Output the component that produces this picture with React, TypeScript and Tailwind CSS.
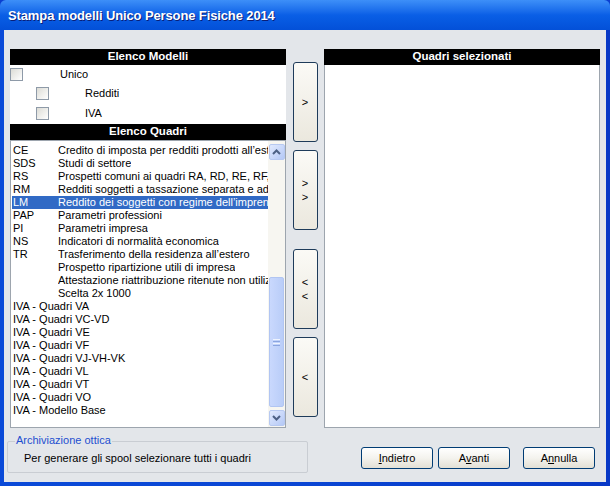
import React from "react";

const rows: [string, string][] = [
  ["CE", "Credito di imposta per redditi prodotti all\u2019estero"],
  ["SDS", "Studi di settore"],
  ["RS", "Prospetti comuni ai quadri RA, RD, RE, RF, RG, RH"],
  ["RM", "Redditi soggetti a tassazione separata e ad imposta sostitutiva"],
  ["LM", "Reddito dei soggetti con regime dell\u2019imprenditoria giovanile"],
  ["PAP", "Parametri professioni"],
  ["PI", "Parametri impresa"],
  ["NS", "Indicatori di normalit\u00e0 economica"],
  ["TR", "Trasferimento della residenza all\u2019estero"],
  ["", "Prospetto ripartizione utili di impresa"],
  ["", "Attestazione riattribuzione ritenute non utilizzate"],
  ["", "Scelta 2x 1000"],
  ["IVA - Quadri VA", ""],
  ["IVA - Quadri VC-VD", ""],
  ["IVA - Quadri VE", ""],
  ["IVA - Quadri VF", ""],
  ["IVA - Quadri VJ-VH-VK", ""],
  ["IVA - Quadri VL", ""],
  ["IVA - Quadri VT", ""],
  ["IVA - Quadri VO", ""],
  ["IVA - Modello Base", ""],
];

function Check() {
  return (
    <div className="w-[13px] h-[13px] border border-[#8e9aa8] bg-gradient-to-br from-[#dcdcd6] to-[#ffffff] shrink-0" />
  );
}

function MoveButton({ label }: { label: string[] }) {
  return (
    <div className="w-[25px] h-[80px] rounded-[3px] border border-[#1e3b5a] bg-gradient-to-b from-[#fbfaf6] to-[#ebe8de] flex flex-col items-center justify-center gap-[2px] text-[11px] leading-[12px] text-black">
      {label.map((l, i) => (
        <span key={i}>{l}</span>
      ))}
    </div>
  );
}

function XpButton({ pre, u, post }: { pre: string; u: string; post: string }) {
  return (
    <div className="w-[72px] h-[22px] rounded-[3px] border border-[#003c74] bg-gradient-to-b from-[#ffffff] via-[#f4f3ee] to-[#e3e0d5] flex items-center justify-center text-[11px] text-black">
      <span>
        {pre}
        <span className="underline">{u}</span>
        {post}
      </span>
    </div>
  );
}

function ScrollArrow({ up }: { up: boolean }) {
  return (
    <div className="w-[16px] h-[16px] rounded-[2px] border border-[#b7c9f1] bg-gradient-to-br from-[#e1eafe] to-[#b4c8f6] flex items-center justify-center">
      <svg width="9" height="6" viewBox="0 0 9 6">
        <path
          d={up ? "M1 5 L4.5 1.5 L8 5" : "M1 1 L4.5 4.5 L8 1"}
          fill="none"
          stroke="#4d6185"
          strokeWidth="2"
        />
      </svg>
    </div>
  );
}

export default function App() {
  return (
    <div
      className="w-[610px] h-[486px] flex flex-col bg-[#0a3fd0] overflow-hidden"
      style={{ fontFamily: '"Liberation Sans", Arial, sans-serif' }}
    >
      {/* Title bar */}
      <div className="h-[30px] shrink-0 bg-gradient-to-b from-[#3d8ff8] via-[#0a5fe6] to-[#0350d8] flex items-center pl-[8px] pt-[1px] rounded-t-[6px]">
        <span
          className="text-white font-bold text-[13px] tracking-[-0.12px]"
          style={{ textShadow: "1px 1px 0 #0a1e78" }}
        >
          Stampa modelli Unico Persone Fisiche 2014
        </span>
      </div>
      {/* Frame + client */}
      <div className="flex-1 flex px-[4px] pb-[4px] bg-gradient-to-r from-[#0a4ad8] via-[#0a46d4] to-[#0838c6]">
        <div className="flex-1 bg-[#e3e6ea] flex flex-col">
          {/* main area */}
          <div className="flex gap-0 pt-[19px] px-[6px] h-[398px]">
            {/* left panel */}
            <div className="w-[276px] flex flex-col">
              <div className="h-[16px] bg-black text-white font-bold text-[11.5px] flex items-center justify-center">
                Elenco Modelli
              </div>
              <div className="h-[59px] bg-white text-[11px] text-black relative">
                <div className="flex items-center h-[14px] mt-[2px]">
                  <Check />
                  <span className="ml-[37px]">Unico</span>
                </div>
                <div className="flex items-center h-[14px] mt-[5px] pl-[26px]">
                  <Check />
                  <span className="ml-[36px]">Redditi</span>
                </div>
                <div className="flex items-center h-[14px] mt-[6px] pl-[26px]">
                  <Check />
                  <span className="ml-[36px]">IVA</span>
                </div>
              </div>
              <div className="h-[16px] bg-black text-white font-bold text-[11.5px] flex items-center justify-center">
                Elenco Quadri
              </div>
              <div className="flex-1 bg-white border border-[#9da5ae] flex overflow-hidden">
                <div className="flex-1 min-w-0 pt-[3px] pl-[1px] text-[11px] text-black overflow-hidden">
                  {rows.map(([c, d], i) => {
                    const sel = c === "LM";
                    return (
                      <div
                        key={i}
                        className={`h-[13px] leading-[13px] flex whitespace-nowrap ${
                          sel ? "bg-[#316ac5] text-white" : ""
                        }`}
                      >
                        {d === "" && c.startsWith("IVA") ? (
                          <span className="pl-[1px]">{c}</span>
                        ) : (
                          <>
                            <span className="w-[46px] pl-[1px] shrink-0">{c}</span>
                            <span className="overflow-hidden">{d}</span>
                          </>
                        )}
                      </div>
                    );
                  })}
                </div>
                {/* scrollbar */}
                <div className="w-[17px] shrink-0 bg-[#f7f6f1] flex flex-col items-center pt-[3px] pb-[1px]">
                  <ScrollArrow up />
                  <div className="flex-1 w-full flex flex-col">
                    <div className="h-[117px]" />
                    <div className="mx-[1px] h-[130px] rounded-[2px] border border-[#b1c5f2] bg-gradient-to-r from-[#c9d8fd] to-[#b9cdf8] flex flex-col items-center justify-center gap-[1px]">
                      <div className="w-[7px] h-[1px] bg-[#eef3fe]" />
                      <div className="w-[7px] h-[1px] bg-[#8ba5df]" />
                      <div className="w-[7px] h-[1px] bg-[#eef3fe]" />
                      <div className="w-[7px] h-[1px] bg-[#8ba5df]" />
                    </div>
                  </div>
                  <ScrollArrow up={false} />
                </div>
              </div>
            </div>
            {/* middle buttons */}
            <div className="w-[38px] flex flex-col items-center pt-[13px]">
              <MoveButton label={[">"]} />
              <div className="h-[8px]" />
              <MoveButton label={[">", ">"]} />
              <div className="h-[19px]" />
              <MoveButton label={["<", "<"]} />
              <div className="h-[8px]" />
              <MoveButton label={["<"]} />
            </div>
            {/* right panel */}
            <div className="w-[276px] flex flex-col">
              <div className="h-[16px] bg-black text-white font-bold text-[11.5px] flex items-center justify-center">
                Quadri selezionati
              </div>
              <div className="flex-1 bg-white border border-[#9da5ae] border-t-0" />
            </div>
          </div>
          {/* bottom area */}
          <div className="flex items-start pl-[3px] pr-[11px] pt-[5px]">
            <div className="w-[301px] h-[38px] relative mt-[2px]">
              <div className="absolute left-0 right-0 top-[6px] bottom-0 border border-[#c9cdd3] rounded-[2px]" />
              <span className="absolute left-[8px] top-[-1px] bg-[#e3e6ea] px-[1px] text-[11px] text-[#1e4fd0] leading-[13px]">
                Archiviazione ottica
              </span>
              <span className="absolute left-[17px] top-[17px] text-[11px] text-black leading-[13px]">
                Per generare gli spool selezionare tutti i quadri
              </span>
            </div>
            <div className="flex-1 flex justify-end gap-[5px] mt-[14px]">
              <XpButton pre="" u="I" post="ndietro" />
              <XpButton pre="A" u="v" post="anti" />
              <div className="w-[3px]" />
              <XpButton pre="A" u="n" post="nulla" />
            </div>
          </div>
        </div>
      </div>
    </div>
  );
}
